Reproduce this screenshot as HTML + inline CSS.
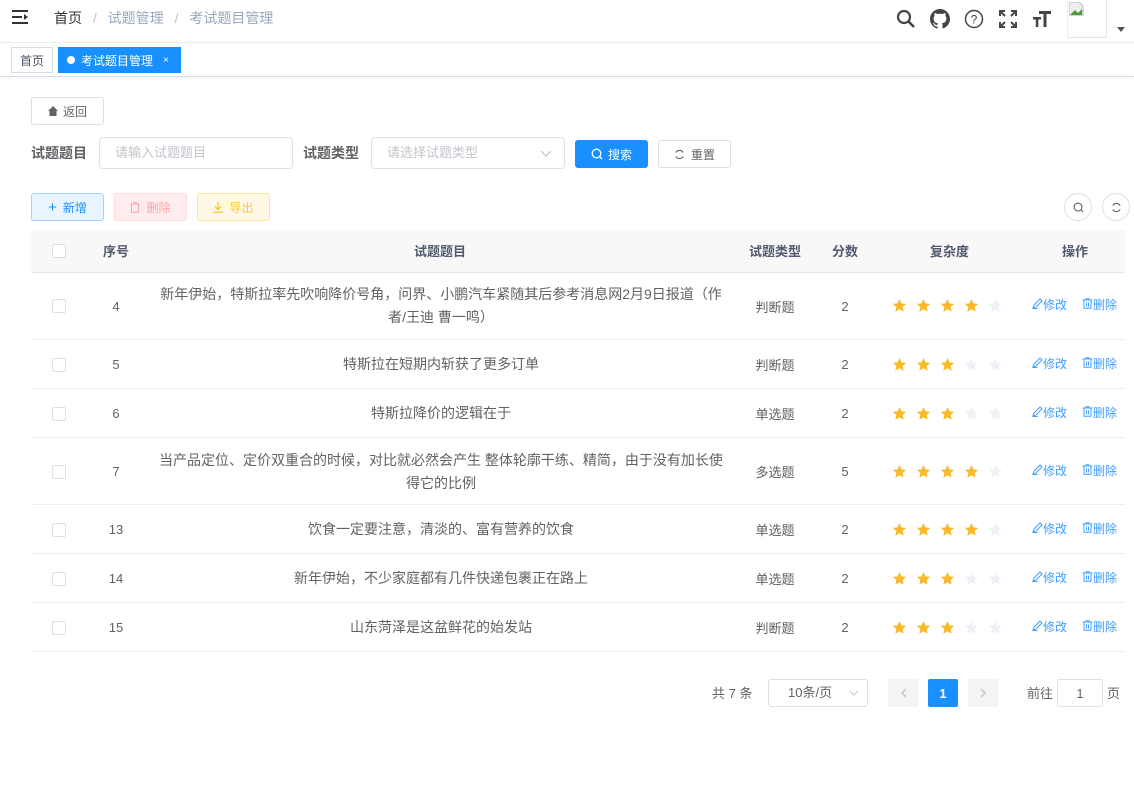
<!DOCTYPE html>
<html><head><meta charset="utf-8"><style>
*{box-sizing:border-box;margin:0;padding:0}
body{width:1134px;height:810px;background:#fff;font-family:"Liberation Sans","Noto Sans CJK SC",sans-serif;font-size:14px;color:#606266;position:relative;overflow:hidden}
.a{position:absolute}
.btn{position:absolute;border:1px solid #dcdfe6;border-radius:3px;font-size:12px;display:flex;align-items:center;justify-content:center;background:#fff}
.cb{position:absolute;width:14px;height:14px;border:1px solid #dcdfe6;border-radius:2px;background:#fff}
.cell{position:absolute;display:flex;align-items:center;justify-content:center;text-align:center}
.hl{position:absolute;left:31px;width:1094px;height:1px;background:#ebeef5}
.op{position:absolute;font-size:12px;color:#409eff}
</style></head><body>
<svg class="a" style="left:12px;top:9px" width="18" height="16" viewBox="0 0 18 16"><rect x="0" y="1" width="16" height="2" fill="#333"/><rect x="0" y="7" width="10" height="2" fill="#333"/><rect x="0" y="13" width="16" height="2" fill="#333"/><path d="M12 5 L16 8 L12 11Z" fill="#333"/></svg>
<div class="a" style="left:54px;top:8px;font-size:14px;color:#303133">首页 <span style="color:#c0c4cc;margin:0 7px">/</span> <span style="color:#97a8be">试题管理</span> <span style="color:#c0c4cc;margin:0 7px">/</span> <span style="color:#97a8be">考试题目管理</span></div>
<svg class="a" style="left:896px;top:9px" width="20" height="20" viewBox="0 0 20 20"><circle cx="8" cy="8" r="6" fill="none" stroke="#444" stroke-width="2.2"/><path d="M12.5 12.5L18 18" stroke="#444" stroke-width="2.6"/></svg>
<svg class="a" style="left:930px;top:9px" width="20" height="20" viewBox="0 0 16 16"><path fill="#444" d="M8 0C3.6 0 0 3.6 0 8c0 3.5 2.3 6.5 5.5 7.6.4.1.5-.2.5-.4v-1.4c-2.2.5-2.7-1-2.7-1-.4-.9-.9-1.2-.9-1.2-.7-.5.1-.5.1-.5.8.1 1.2.8 1.2.8.7 1.2 1.9.9 2.3.7.1-.5.3-.9.5-1.100-1.8-.2-3.6-.9-3.6-4 0-.9.3-1.600.8-2.1-.1-.2-.4-1 .1-2.1 0 0 .7-.2 2.2.8.6-.2 1.3-.3 2-.3s1.4.1 2 .3c1.5-1 2.2-.8 2.2-.8.4 1.1.2 1.9.1 2.1.5.6.8 1.3.8 2.1 0 3.1-1.9 3.7-3.6 3.9.3.3.5.8.5 1.5v2.2c0 .2.1.5.6.4C13.7 14.5 16 11.5 16 8c0-4.4-3.6-8-8-8z"/></svg>
<svg class="a" style="left:964px;top:9px" width="20" height="20" viewBox="0 0 20 20"><circle cx="10" cy="10" r="8.5" fill="none" stroke="#444" stroke-width="1.5"/><text x="10" y="14.5" font-size="12" text-anchor="middle" fill="#444" font-family="Liberation Sans">?</text></svg>
<svg class="a" style="left:998px;top:9px" width="20" height="20" viewBox="0 0 20 20" fill="none" stroke="#444" stroke-width="2"><path d="M2 7V2h5M2 2l5 5M13 2h5v5M18 2l-5 5M2 13v5h5M2 18l5-5M18 13v5h-5M18 18l-5-5"/></svg>
<svg class="a" style="left:1032px;top:9px" width="20" height="20" viewBox="0 0 20 20" fill="#444"><rect x="7" y="2" width="12" height="3"/><rect x="11.5" y="2" width="3" height="16"/><rect x="1" y="8" width="8" height="2.5"/><rect x="3.8" y="8" width="2.5" height="10"/></svg>
<div class="a" style="left:1067px;top:1px;width:40px;height:37px;border:1px solid #e4e4e4;border-top:none;border-left:1px solid #eee"></div>
<svg class="a" style="left:1069px;top:2px" width="16" height="14"><path d="M0 0h10l4 4v10H0z" fill="#eee" stroke="#bbb"/><path d="M1 13l5-5 3 3 4-4v6z" fill="#4a9a3a"/></svg>
<div class="a" style="left:1117px;top:27px;border-left:4px solid transparent;border-right:4px solid transparent;border-top:5px solid #555"></div>
<div class="a" style="left:0;top:42px;width:1134px;height:1px;background:#eee;box-shadow:0 1px 3px rgba(0,0,0,.06)"></div>
<div class="a" style="left:0;top:76px;width:1134px;height:1px;background:#d8dce5;box-shadow:0 1px 3px rgba(0,0,0,.12)"></div>
<div class="a" style="left:11px;top:47px;width:42px;height:26px;border:1px solid #d8dce5;font-size:12px;color:#495060;display:flex;align-items:center;justify-content:center;background:#fff">首页</div>
<div class="a" style="left:58px;top:47px;width:123px;height:26px;background:#1890ff;color:#fff;font-size:12px;display:flex;align-items:center;padding-left:9px"><span style="display:inline-block;width:8px;height:8px;border-radius:50%;background:#fff;margin-right:6px"></span>考试题目管理<span style="margin-left:10px;font-size:10px">×</span></div>
<div class="btn" style="left:31px;top:97px;width:73px;height:28px;color:#606266"><svg width="10" height="10" viewBox="0 0 10 10" style="margin-right:5px"><path d="M5 0L0 5h1.5v5h7V5H10z" fill="#606266"/></svg>返回</div>
<div class="a" style="left:31px;top:143px;font-weight:bold;color:#606266">试题题目</div>
<div class="a" style="left:99px;top:137px;width:194px;height:32px;border:1px solid #dcdfe6;border-radius:4px;padding-left:15px;line-height:30px;font-size:13px;color:#c0c4cc">请输入试题题目</div>
<div class="a" style="left:303px;top:143px;font-weight:bold;color:#606266">试题类型</div>
<div class="a" style="left:371px;top:137px;width:194px;height:32px;border:1px solid #dcdfe6;border-radius:4px;padding-left:15px;line-height:30px;font-size:13px;color:#c0c4cc">请选择试题类型</div>
<svg class="a" style="left:540px;top:150px" width="12" height="8"><path d="M1 1l5 5 5-5" fill="none" stroke="#c0c4cc" stroke-width="1.2"/></svg>
<div class="btn" style="left:575px;top:140px;width:73px;height:28px;background:#1890ff;border-color:#1890ff;color:#fff"><svg width="12" height="12" viewBox="0 0 12 12" style="margin-right:5px"><circle cx="5.5" cy="5.5" r="4.3" fill="none" stroke="#fff" stroke-width="1.3"/><path d="M8.5 8.5L11 11" stroke="#fff" stroke-width="1.3"/></svg>搜索</div>
<div class="btn" style="left:658px;top:140px;width:73px;height:28px;color:#606266"><svg width="11" height="11" viewBox="0 0 12 12" style="margin-right:6px"><path d="M10 4A4.5 4.5 0 0 0 2 4M2 8a4.5 4.5 0 0 0 8 0" fill="none" stroke="#606266" stroke-width="1.2"/></svg>重置</div>
<div class="btn" style="left:31px;top:193px;width:73px;height:28px;background:#e8f4ff;border-color:#a3d3ff;color:#1890ff"><span style="margin-right:6px;font-size:15px">+</span>新增</div>
<div class="btn" style="left:114px;top:193px;width:73px;height:28px;background:#ffeded;border-color:#ffdbdb;color:#ffa4a4"><svg width="10" height="11" viewBox="0 0 10 11" style="margin-right:6px"><path d="M0 2h10M3.5 2V.7h3V2M1.5 2v8.3h7V2" fill="none" stroke="#ffa4a4"/></svg>删除</div>
<div class="btn" style="left:197px;top:193px;width:73px;height:28px;background:#fff8e6;border-color:#ffe399;color:#ffc833"><svg width="10" height="11" viewBox="0 0 10 11" style="margin-right:6px"><path d="M5 0v7M2 4.5L5 7.5 8 4.5M0 10.3h10" fill="none" stroke="#ffba00"/></svg>导出</div>
<div class="a" style="left:1064px;top:193px;width:28px;height:28px;border:1px solid #dcdfe6;border-radius:50%;display:flex;align-items:center;justify-content:center"><svg width="11" height="11" viewBox="0 0 12 12"><circle cx="5.5" cy="5.5" r="4.3" fill="none" stroke="#606266" stroke-width="1.2"/><path d="M8.5 8.5L11 11" stroke="#606266" stroke-width="1.2"/></svg></div>
<div class="a" style="left:1102px;top:193px;width:28px;height:28px;border:1px solid #dcdfe6;border-radius:50%;display:flex;align-items:center;justify-content:center"><svg width="11" height="11" viewBox="0 0 12 12"><path d="M10 4A4.5 4.5 0 0 0 2 4M2 8a4.5 4.5 0 0 0 8 0" fill="none" stroke="#606266" stroke-width="1.2"/></svg></div>
<div class="a" style="left:31px;top:230px;width:1094px;height:42px;background:#f8f8f9"></div>
<div class="hl" style="top:272px;background:#dfe6ec"></div>
<div class="cb" style="left:52px;top:244px"></div>
<div class="a" style="top:241px;left:0;width:1134px;font-weight:bold;color:#515a6e;font-size:13px">
<span class="a" style="left:103px">序号</span><span class="a" style="left:414px">试题题目</span><span class="a" style="left:749px">试题类型</span><span class="a" style="left:832px">分数</span><span class="a" style="left:930px">复杂度</span><span class="a" style="left:1062px">操作</span></div>
<div id="rows"></div>
<div class="a" style="left:712px;top:683px;font-size:13px;color:#606266">共 7 条</div>
<div class="a" style="left:768px;top:679px;width:100px;height:28px;border:1px solid #dcdfe6;border-radius:3px;font-size:13px;line-height:26px;padding-left:19px">10条/页</div>
<svg class="a" style="left:849px;top:690px" width="10" height="6"><path d="M1 1l4 4 4-4" fill="none" stroke="#c0c4cc"/></svg>
<div class="a" style="left:888px;top:679px;width:30px;height:28px;background:#f4f4f5;border-radius:2px;display:flex;align-items:center;justify-content:center"><svg width="7" height="10"><path d="M6 1L2 5l4 4" fill="none" stroke="#c0c4cc" stroke-width="1.5"/></svg></div>
<div class="a" style="left:928px;top:679px;width:30px;height:28px;background:#1890ff;border-radius:2px;color:#fff;font-weight:bold;font-size:13px;display:flex;align-items:center;justify-content:center">1</div>
<div class="a" style="left:968px;top:679px;width:30px;height:28px;background:#f4f4f5;border-radius:2px;display:flex;align-items:center;justify-content:center"><svg width="7" height="10"><path d="M1 1l4 4-4 4" fill="none" stroke="#c0c4cc" stroke-width="1.5"/></svg></div>
<div class="a" style="left:1027px;top:683px;font-size:13px">前往</div>
<div class="a" style="left:1057px;top:679px;width:46px;height:28px;border:1px solid #dcdfe6;border-radius:3px;font-size:13px;text-align:center;line-height:28px">1</div>
<div class="a" style="left:1107px;top:683px;font-size:13px">页</div>
<script>
var rows=[[272,68,4,"新年伊始，特斯拉率先吹响降价号角，问界、小鹏汽车紧随其后参考消息网2月9日报道（作者/王迪 曹一鸣）","判断题",2,4],
[340,49,5,"特斯拉在短期内斩获了更多订单","判断题",2,3],
[389,49,6,"特斯拉降价的逻辑在于","单选题",2,3],
[438,67,7,"当产品定位、定价双重合的时候，对比就必然会产生 整体轮廓干练、精简，由于没有加长使得它的比例","多选题",5,4],
[505,49,13,"饮食一定要注意，清淡的、富有营养的饮食","单选题",2,4],
[554,49,14,"新年伊始，不少家庭都有几件快递包裹正在路上","单选题",2,3],
[603,49,15,"山东菏泽是这盆鲜花的始发站","判断题",2,3]];
var h="";
rows.forEach(function(r){var t=r[0],H=r[1],c=t+H/2;
h+='<div class="hl" style="top:'+(t+H-1)+'px"></div>';
h+='<div class="cb" style="left:52px;top:'+(c-7)+'px"></div>';
h+='<div class="cell" style="left:86px;width:60px;top:'+t+'px;height:'+H+'px;font-size:13px">'+r[2]+'</div>';
h+='<div class="cell" style="left:155px;width:572px;top:'+t+'px;height:'+H+'px;line-height:23px">'+r[3]+'</div>';
h+='<div class="cell" style="left:735px;width:80px;top:'+t+'px;height:'+H+'px;font-size:13px">'+r[4]+'</div>';
h+='<div class="cell" style="left:815px;width:60px;top:'+t+'px;height:'+H+'px;font-size:13px">'+r[5]+'</div>';
for(var i=0;i<5;i++){h+='<svg class="a" style="left:'+(892+i*24)+'px;top:'+(c-8)+'px" width="15" height="15" viewBox="0 0 24 24"><path d="M12 1.5l3.2 7 7.6.8-5.7 5.1 1.6 7.5L12 18l-6.7 3.9 1.6-7.5L1.2 9.3l7.6-.8z" fill="'+(i<r[6]?'#f7ba2a':'#eef1f6')+'"/></svg>';}
h+='<div class="op" style="left:1032px;top:'+(c-10)+'px"><svg width="11" height="11" viewBox="0 0 11 11"><path d="M1 10L2 7 8 1l2 2-6 6zM0.5 10.5h5" fill="none" stroke="#409eff"/></svg>修改</div>';
h+='<div class="op" style="left:1082px;top:'+(c-10)+'px"><svg width="11" height="11" viewBox="0 0 10 11"><path d="M0 2h10M3.5 2V.7h3V2M1.5 2v8.3h7V2M4 4.5v4M6 4.5v4" fill="none" stroke="#409eff"/></svg>删除</div>';
});
document.getElementById("rows").innerHTML=h;
</script>
</body></html>
